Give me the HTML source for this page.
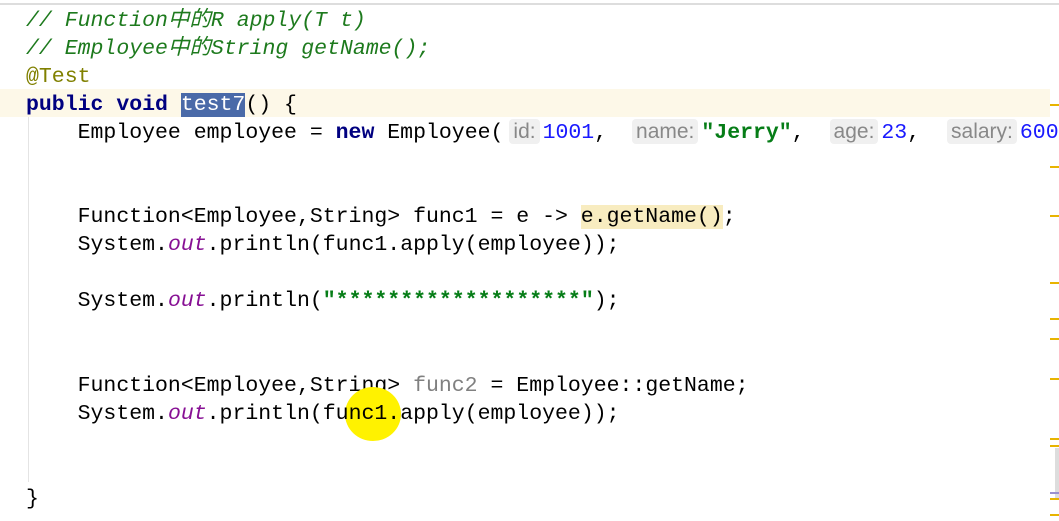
<!DOCTYPE html>
<html><head><meta charset="utf-8"><style>
body{margin:0;width:1059px;height:521px;overflow:hidden;background:#fff;position:relative;font-family:"Liberation Mono","Noto Sans CJK SC",monospace;font-size:21.5px;color:#000}
.l{position:absolute;left:26px;height:28px;line-height:28px;white-space:pre}
.c{color:#1d7a1d;font-style:italic}
.k{color:#000080;font-weight:bold}
.n{color:#1a1aff}
.s{color:#067d17;font-weight:bold}
.o{color:#871094;font-style:italic}
.g{color:#808080}
.a{color:#808000}
.h{display:inline-block;font-family:"Liberation Sans",sans-serif;font-size:21px;color:#888;background:#f0f0f0;border-radius:4px;padding:0 4px;line-height:25px;margin:0 3px 0 6px}
.m{position:absolute;left:1050px;width:9px;height:2px;background:#e8b400}
</style></head><body>
<div style="position:absolute;left:0;top:3px;width:1059px;height:2px;background:#ddd"></div>
<div style="position:absolute;left:0;top:89px;width:1050px;height:28px;background:#fdf8e8"></div>
<div style="position:absolute;left:28px;top:117px;width:1px;height:365px;background:#e4e4e4"></div>
<div class="l c" style="top:7px">// Function中的R apply(T t)</div>
<div class="l c" style="top:35px">// Employee中的String getName();</div>
<div class="l a" style="top:63px">@Test</div>
<div class="l" style="top:91px"><span class="k">public void </span><span style="background:#4a6aa8;color:#fff">test7</span>() {</div>
<div class="l" style="top:119px">    Employee employee = <span class="k">new</span> Employee(<span class="h">id:</span><span class="n">1001</span>, <span class="h" style="margin-left:12px">name:</span><span class="s">"Jerry"</span>, <span class="h" style="margin-left:12px">age:</span><span class="n">23</span>, <span class="h" style="margin-left:14px">salary:</span><span class="n">600</span></div>
<div class="l" style="top:203px">    Function&lt;Employee,String&gt; func1 = e -&gt; <span style="background:#f8ecc0">e.getName()</span>;</div>
<div class="l" style="top:231px">    System.<span class="o">out</span>.println(func1.apply(employee));</div>
<div class="l" style="top:287px">    System.<span class="o">out</span>.println(<span class="s">"*******************"</span>);</div>
<div class="l" style="top:372px">    Function&lt;Employee,String&gt; <span class="g">func2</span> = Employee::getName;</div>
<div style="position:absolute;left:345px;top:387px;width:56px;height:54px;border-radius:50%;background:#fff200"></div>
<div class="l" style="top:400px">    System.<span class="o">out</span>.println(func1.apply(employee));</div>
<div class="l" style="top:485px">}</div>
<div style="position:absolute;left:1055px;top:448px;width:4px;height:52px;background:#ddd"></div>
<div class="m" style="top:104px"></div><div class="m" style="top:166px"></div><div class="m" style="top:215px"></div>
<div class="m" style="top:282px"></div><div class="m" style="top:318px"></div><div class="m" style="top:338px"></div>
<div class="m" style="top:378px"></div><div class="m" style="top:438px"></div><div class="m" style="top:445px"></div>
<div class="m" style="top:492px;background:#9a90d0"></div><div class="m" style="top:498px"></div><div class="m" style="top:514px"></div>
</body></html>
